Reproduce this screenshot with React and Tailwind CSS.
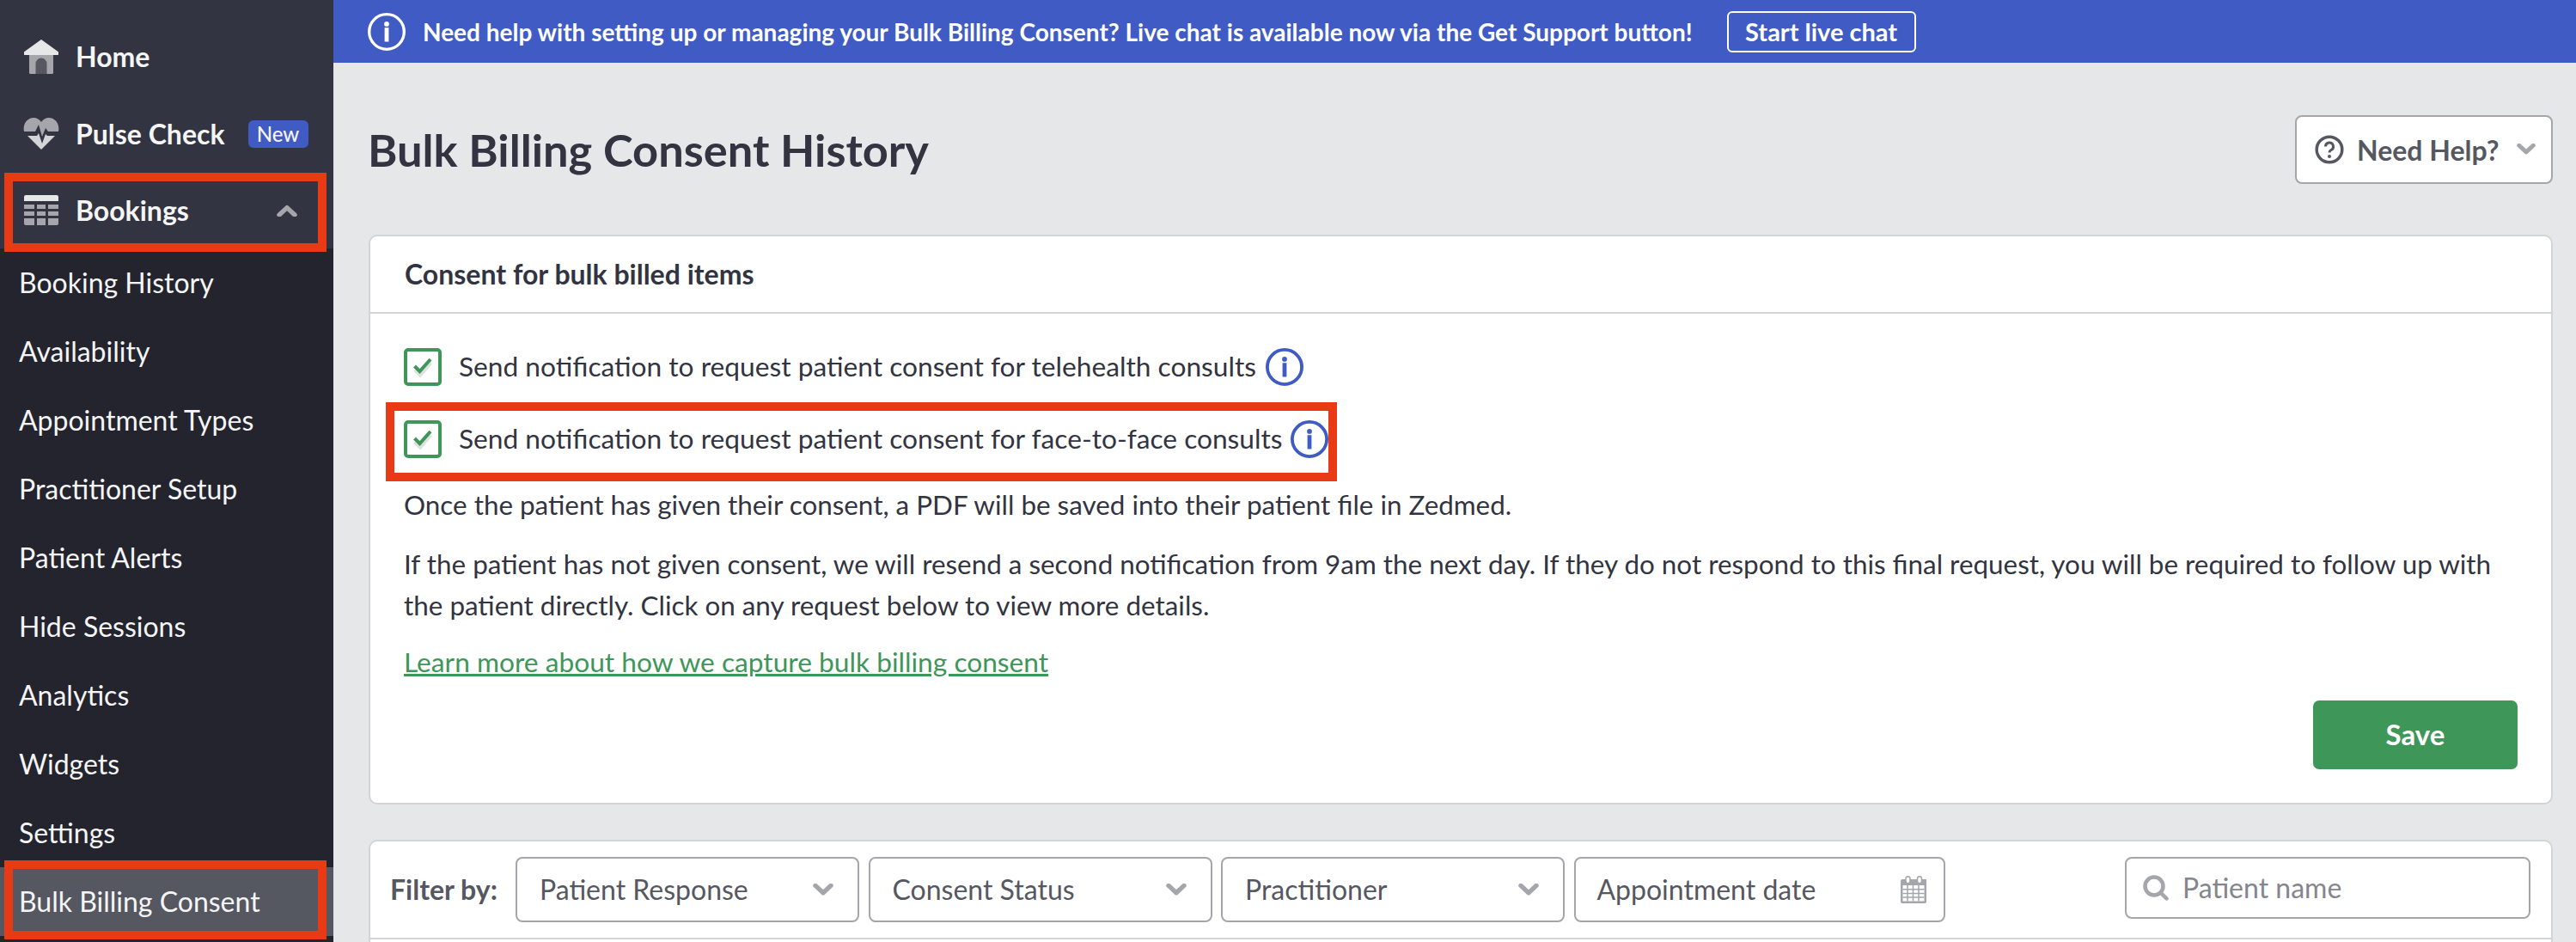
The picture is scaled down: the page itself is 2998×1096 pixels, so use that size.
const font = { fontFamily: 'Lato, sans-serif' };

function HomeIcon() {
  return (
    <svg width="40" height="40" viewBox="0 0 40 40" className="shrink-0">
      <path d="M6 16h28v22.500a1.500 1.500 0 0 1-1.500 1.500h-25A1.500 1.500 0 0 1 6 38.500z" fill="#a5a6ab" />
      <path d="M13.500 40V28a6.500 6.500 0 0 1 13 0v12z" fill="#555761" />
      <path d="M20 0 L39.500 14 a1.500 1.500 0 0 1 .5 1.500V17.500a.8.8 0 0 1-.8.6H.8A.8.8 0 0 1 0 17.500v-2a1.500 1.500 0 0 1 .5-1.500z" fill="#e6e7e9" />
    </svg>
  );
}

function PulseIcon() {
  return (
    <svg width="42" height="38" viewBox="0 0 42 38" className="shrink-0">
      <path d="M1 16C-1 6 6 0 12 0c4 0 7 2 9 5 2-3 5-5 9-5 6 0 13 6 11 16H29l-3-4-4 10-4-14-4 8H1z" fill="#a5a6ab" />
      <path d="M5 21h11l2-3 4 12 4-11 2 2h9L21 37z" fill="#d3d4d7" />
    </svg>
  );
}

function TableIcon() {
  return (
    <svg width="40" height="36" viewBox="0 0 40 36" className="shrink-0">
      <path d="M2 0h36a2 2 0 0 1 2 2v5H0V2a2 2 0 0 1 2-2z" fill="#e6e7e9" />
      <g fill="#a5a6ab">
        <rect x="0" y="11" width="12" height="5" />
        <rect x="15" y="11" width="10" height="5" />
        <rect x="28" y="11" width="12" height="5" />
        <rect x="0" y="19" width="12" height="5" />
        <rect x="15" y="19" width="10" height="5" />
        <rect x="28" y="19" width="12" height="5" />
        <path d="M0 27h12v8H2a2 2 0 0 1-2-2z" />
        <rect x="15" y="27" width="10" height="8" />
        <path d="M28 27h12v6a2 2 0 0 1-2 2H28z" />
      </g>
    </svg>
  );
}

function Chevron({ up, color, size = 20, stroke = 4.5 }) {
  return (
    <svg width={size} height={size * 0.6} viewBox="0 0 20 12" className="shrink-0">
      <path d={up ? 'M2.500 10 10 3l7.500 7' : 'M2.500 2 10 9l7.500-7'} fill="none" stroke={color} strokeWidth={stroke} strokeLinecap="round" strokeLinejoin="round" />
    </svg>
  );
}

function InfoIcon({ size, color, stroke = 4 }) {
  return (
    <svg width={size} height={size} viewBox="0 0 46 46" className="shrink-0">
      <circle cx="23" cy="23" r={23 - stroke / 2} fill="none" stroke={color} strokeWidth={stroke} />
      <circle cx="23" cy="13.500" r="3" fill={color} />
      <rect x="20.500" y="18" width="5" height="17" fill={color} />
    </svg>
  );
}

function CheckBox() {
  return (
    <div className="w-[44px] h-[44px] shrink-0 rounded-[5px] border-[4px] border-[#3e9659] bg-white flex items-center justify-center">
      <svg width="26" height="24" viewBox="0 0 26 24">
        <path d="M4 13l6 6L22 5" fill="none" stroke="#000" strokeOpacity="0.12" strokeWidth="5" transform="translate(0 2)" />
        <path d="M3.500 11l6 6L22 3" fill="none" stroke="#3e9659" strokeWidth="4" />
      </svg>
    </div>
  );
}

function SelectField({ label }) {
  return (
    <div className="w-[400px] h-[76px] shrink-0 bg-white border-2 border-[#a5a6ab] rounded-[8px] flex items-center justify-between pl-[26px] pr-[28px] text-[32px] text-[#555761]">
      <span>{label}</span>
      <Chevron color="#a5a6ab" size={24} />
    </div>
  );
}

const subItems = ['Booking History', 'Availability', 'Appointment Types', 'Practitioner Setup', 'Patient Alerts', 'Hide Sessions', 'Analytics', 'Widgets', 'Settings'];

function Sidebar() {
  return (
    <aside className="relative w-[388px] shrink-0 h-[1096px] bg-[#23242d] overflow-hidden">
      <div className="h-[289px] bg-[#323441] pt-[26px]">
        <div className="h-[80px] pl-[28px] flex items-center gap-[20px] text-[32px] font-bold text-[#f5f5f6]">
          <HomeIcon />
          <span>Home</span>
        </div>
        <div className="h-[80px] mt-[10px] pl-[27px] flex items-center gap-[19px] text-[32px] font-bold text-[#f5f5f6]">
          <PulseIcon />
          <span>Pulse Check</span>
          <span className="ml-[8px] w-[70px] h-[32px] rounded-[6px] bg-[#405cc4] text-[24px] font-medium flex items-center justify-center">New</span>
        </div>
        <div className="h-[80px] mt-[9px] pl-[28px] pr-[42px] flex items-center gap-[20px] text-[32px] font-bold text-[#f5f5f6]">
          <TableIcon />
          <span className="flex-1">Bookings</span>
          <Chevron up color="#a5a6ab" size={24} />
        </div>
      </div>
      <div>
        {subItems.map((item) => (
          <div key={item} className="h-[80px] pl-[22px] flex items-center text-[32px] text-[#f5f5f6]">{item}</div>
        ))}
        <div className="h-[80px] pl-[22px] flex items-center text-[32px] text-[#f5f5f6] bg-[#555761]">Bulk Billing Consent</div>
      </div>
      {/* red annotation boxes */}
      <div className="absolute left-[5px] top-[201px] w-[375px] h-[92px] border-[10px] border-[#e83a15]" />
      <div className="absolute left-[5px] top-[1001px] w-[375px] h-[92px] border-[10px] border-[#e83a15]" />
    </aside>
  );
}

function Banner() {
  return (
    <div className="h-[73px] shrink-0 bg-[#405cc4] flex items-center pl-[40px] text-white">
      <InfoIcon size={44} color="#fff" stroke={3.5} />
      <span className="ml-[20px] text-[28px] font-bold">Need help with setting up or managing your Bulk Billing Consent? Live chat is available now via the Get Support button!</span>
      <button className="ml-[40px] h-[48px] w-[220px] border-2 border-white rounded-[6px] text-[29px] font-bold">Start live chat</button>
    </div>
  );
}

function ConsentCard() {
  return (
    <section className="mt-[59px] bg-white border-2 border-[#d3d4d7] rounded-[10px] h-[663px] shrink-0">
      <div className="h-[90px] pl-[40px] flex items-center border-b-2 border-[#d3d4d7] text-[32px] font-bold text-[#323441]">Consent for bulk billed items</div>
      <div className="pl-[39px] pr-[39px] text-[31.7px] text-[#323441]">
        <div className="mt-[40px] h-[44px] flex items-center">
          <CheckBox />
          <span className="ml-[20px]">Send notification to request patient consent for telehealth consults</span>
          <span className="ml-[11px]"><InfoIcon size={44} color="#405cc4" /></span>
        </div>
        <div className="relative mt-[40px] h-[44px] flex items-center">
          <CheckBox />
          <span className="ml-[20px]">Send notification to request patient consent for face-to-face consults</span>
          <span className="ml-[9px]"><InfoIcon size={44} color="#405cc4" /></span>
          {/* red annotation box */}
          <div className="absolute left-[-21px] top-[-21px] w-[1107px] h-[92px] border-[10px] border-[#e83a15]" />
        </div>
        <p className="mt-[32px] leading-[44px] text-[31.4px]">Once the patient has given their consent, a PDF will be saved into their patient file in Zedmed.</p>
        <p className="mt-[23px] leading-[48px] text-[31.4px]">If the patient has not given consent, we will resend a second notification from 9am the next day. If they do not respond to this final request, you will be required to follow up with the patient directly. Click on any request below to view more details.</p>
        <a className="block mt-[20px] leading-[44px] text-[#3e9659] underline">Learn more about how we capture bulk billing consent</a>
        <div className="mt-[23px] flex justify-end">
          <button className="w-[238px] h-[80px] rounded-[7px] bg-[#3e9659] text-white text-[33px] font-bold">Save</button>
        </div>
      </div>
    </section>
  );
}

function FilterCard() {
  return (
    <section className="mt-[41px] bg-white border-2 border-[#d3d4d7] rounded-t-[10px] h-[140px] shrink-0">
      <div className="h-[114px] border-b-2 border-[#d3d4d7] pl-[23px] pr-[24px] flex items-center">
        <span className="w-[146px] shrink-0 text-[32px] font-bold text-[#555761]">Filter by:</span>
        <div className="flex gap-[10.5px]">
          <SelectField label="Patient Response" />
          <SelectField label="Consent Status" />
          <SelectField label="Practitioner" />
          <div className="w-[432px] h-[76px] bg-white border-2 border-[#a5a6ab] rounded-[8px] flex items-center justify-between pl-[25px] pr-[20px] text-[32px] text-[#555761]">
            <span>Appointment date</span>
            <svg width="30" height="32" viewBox="0 0 30 32">
              <path d="M2 4h28v26a2 2 0 0 1-2 2H2a2 2 0 0 1-2-2V6a2 2 0 0 1 2-2z" fill="#a5a6ab" transform="translate(0 0)" />
              <path d="M2.500 11h25v18.500h-25z" fill="#fff" />
              <path d="M2.500 15.800h25M2.500 20.500h25M2.500 25h25M8 11v18.500M14.500 11v18.500M21 11v18.500" stroke="#a5a6ab" strokeWidth="1.500" />
              <rect x="6" y="0.800" width="5" height="8" rx="2.500" fill="#fff" stroke="#a5a6ab" strokeWidth="1.500" />
              <rect x="19.500" y="0.800" width="5" height="8" rx="2.500" fill="#fff" stroke="#a5a6ab" strokeWidth="1.500" />
            </svg>
          </div>
        </div>
        <div className="ml-auto w-[472px] h-[72px] mb-[5px] bg-white border-2 border-[#a5a6ab] rounded-[8px] flex items-center pl-[19px] text-[32px] text-[#85868d]">
          <svg width="30" height="30" viewBox="0 0 30 30" className="shrink-0">
            <circle cx="13" cy="13" r="10.500" fill="none" stroke="#a5a6ab" strokeWidth="4.500" />
            <path d="M21 21l6.500 6.500" stroke="#a5a6ab" strokeWidth="4.500" strokeLinecap="round" />
          </svg>
          <span className="ml-[16px]">Patient name</span>
        </div>
      </div>
    </section>
  );
}

export default function App() {
  return (
    <div className="w-[2998px] h-[1096px] flex overflow-hidden bg-[#e6e7e9]" style={font}>
      <Sidebar />
      <main className="flex-1 min-w-0 min-h-0 flex flex-col">
        <Banner />
        <div className="flex-1 pl-[41px] pr-[27px] flex flex-col">
          <div className="mt-[61px] h-[80px] shrink-0 flex items-center justify-between">
            <h1 className="-ml-[1px] text-[52.4px] font-bold text-[#323441]">Bulk Billing Consent History</h1>
            <button className="w-[300px] h-[80px] bg-white border-2 border-[#a5a6ab] rounded-[8px] flex items-center pl-[21px] text-[32px] font-bold text-[#555761]">
              <svg width="34" height="34" viewBox="0 0 34 34" className="shrink-0">
                <circle cx="17" cy="17" r="14.800" fill="none" stroke="#555761" strokeWidth="3.500" />
                <path d="M12.500 13.500a4.500 4.500 0 1 1 6.500 4c-1.500.8-2 1.500-2 3" fill="none" stroke="#555761" strokeWidth="3" />
                <circle cx="17" cy="25" r="2" fill="#555761" />
              </svg>
              <span className="ml-[15px] pt-[2px]">Need Help?</span>
              <span className="ml-[21px]"><Chevron color="#a5a6ab" size={22} /></span>
            </button>
          </div>
          <ConsentCard />
          <FilterCard />
        </div>
      </main>
    </div>
  );
}
